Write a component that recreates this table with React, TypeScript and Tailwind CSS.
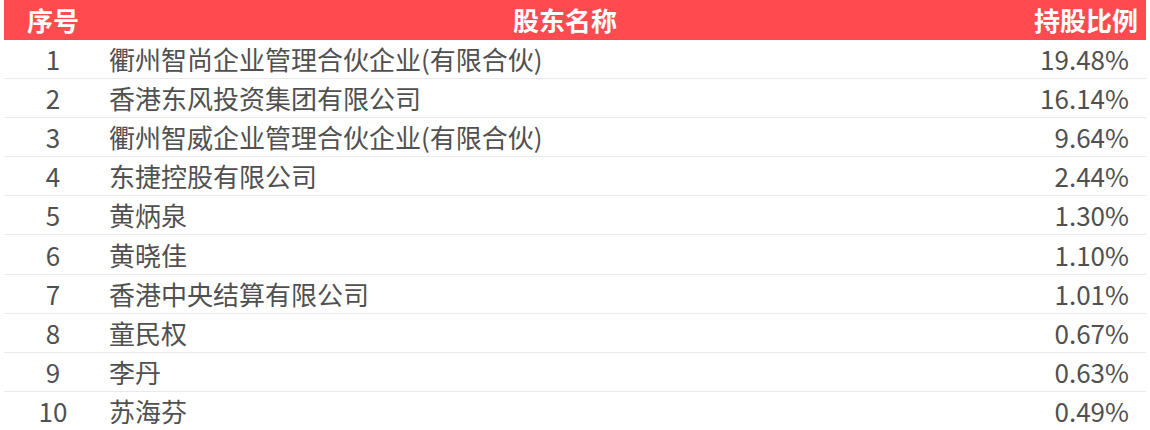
import React from "react";

const rows: [string, string, string][] = [
  ["1", "衢州智尚企业管理合伙企业(有限合伙)", "19.48%"],
  ["2", "香港东风投资集团有限公司", "16.14%"],
  ["3", "衢州智威企业管理合伙企业(有限合伙)", "9.64%"],
  ["4", "东捷控股有限公司", "2.44%"],
  ["5", "黄炳泉", "1.30%"],
  ["6", "黄晓佳", "1.10%"],
  ["7", "香港中央结算有限公司", "1.01%"],
  ["8", "童民权", "0.67%"],
  ["9", "李丹", "0.63%"],
  ["10", "苏海芬", "0.49%"],
];

export default function App() {
  return (
    <div
      className="w-[1150px] h-[430px] overflow-hidden bg-white px-[4px]"
      style={{ fontFamily: '"Noto Sans CJK SC", "Noto Sans", sans-serif' }}
    >
      <div className="grid grid-cols-[98px_926px_118px] h-[40px] bg-[#ff4b4f] text-white text-[26px] font-bold items-center">
        <div className="text-center leading-none">序号</div>
        <div className="text-center leading-none">股东名称</div>
        <div className="text-right pr-[8px] leading-none">持股比例</div>
      </div>
      {rows.map(([n, name, pct], i) => (
        <div
          key={n}
          className={
            "grid grid-cols-[98px_926px_118px] h-[39.1px] items-center text-[26px] text-[#505050] " +
            (i < rows.length - 1 ? "border-b border-[#e9e9f0]" : "")
          }
        >
          <div className="text-center leading-none">{n}</div>
          <div className="pl-[7px] leading-none">{name}</div>
          <div className="text-right pr-[17px] leading-none">{pct}</div>
        </div>
      ))}
    </div>
  );
}
